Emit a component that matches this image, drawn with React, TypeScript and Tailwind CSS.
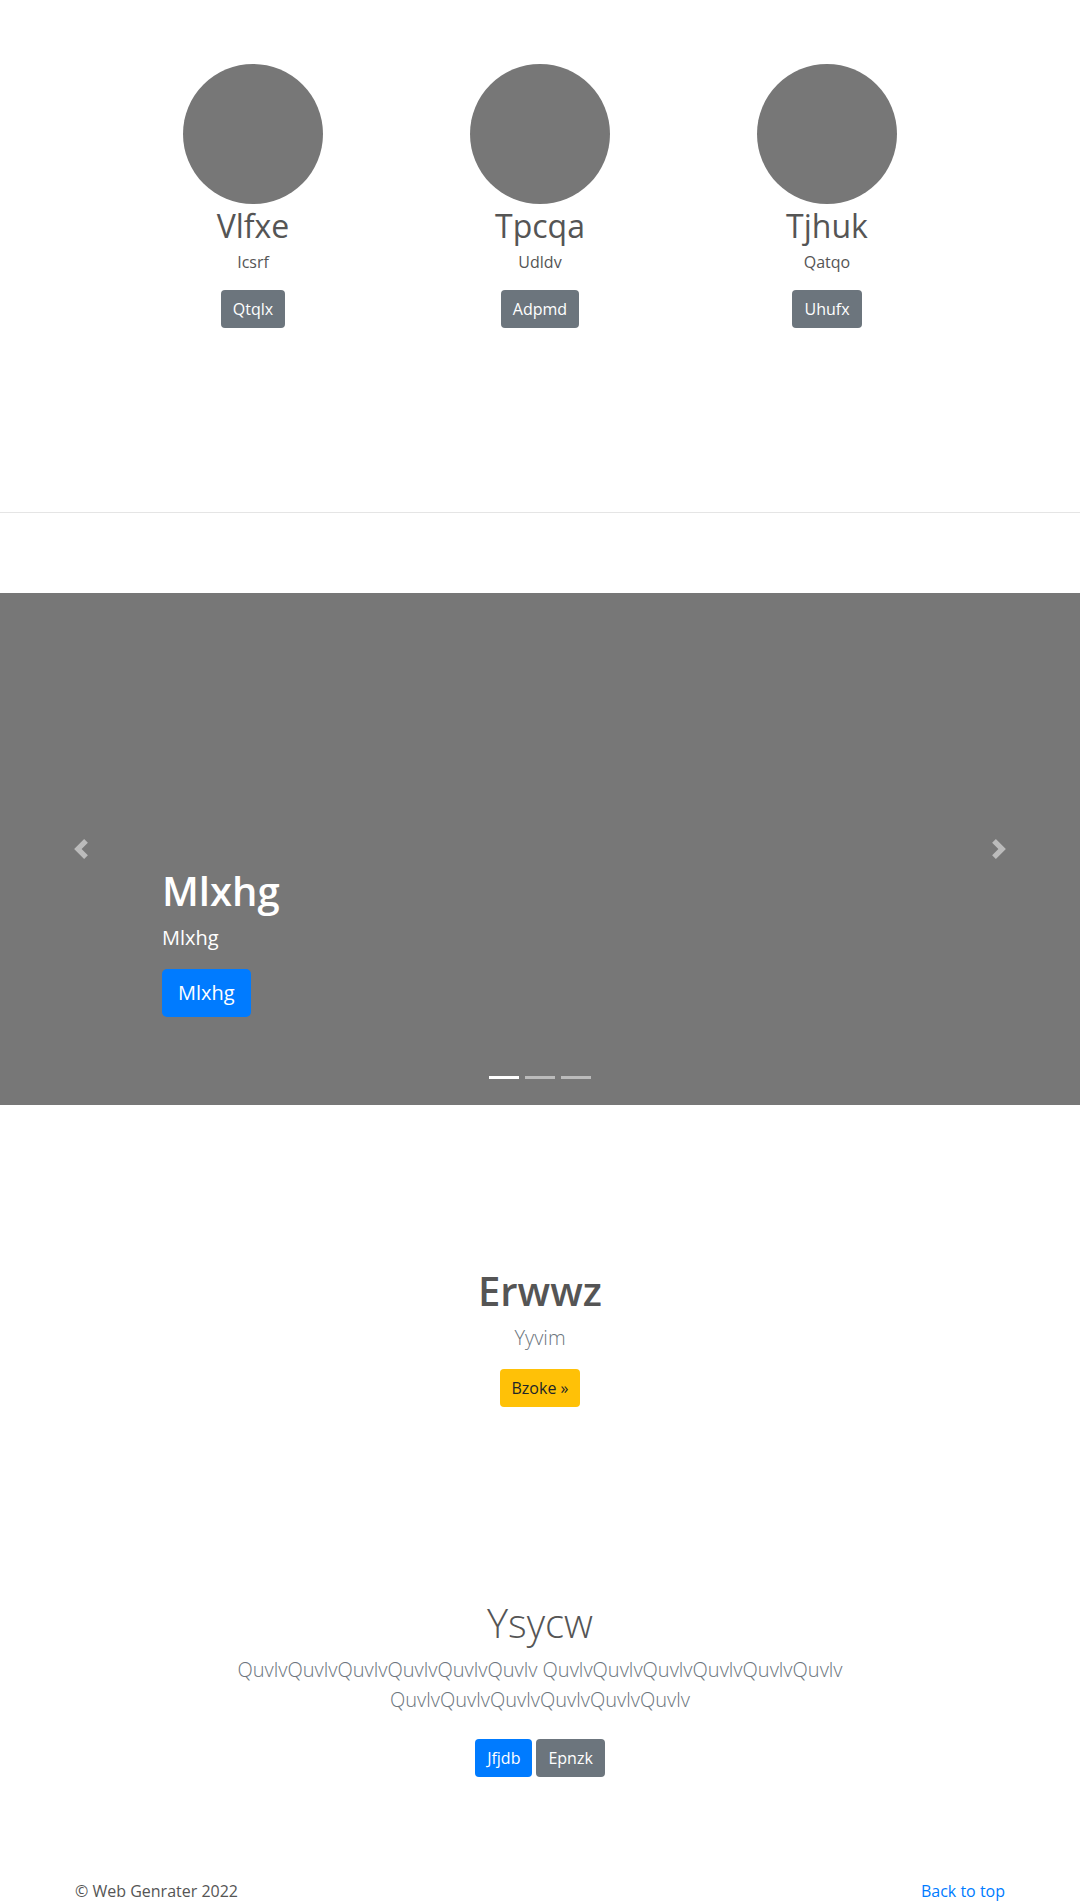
const FONT = { fontFamily: '"Open Sans", "Liberation Sans", sans-serif' };

const people = [
  { name: 'Vlfxe', role: 'Icsrf', action: 'Qtqlx' },
  { name: 'Tpcqa', role: 'Udldv', action: 'Adpmd' },
  { name: 'Tjhuk', role: 'Qatqo', action: 'Uhufx' },
];

const BTN = 'text-white px-3 py-[7px] rounded-[4px] leading-6';

function Chevron({ dir }: { dir: 'prev' | 'next' }) {
  return (
    <svg width="20" height="20" viewBox="0 0 8 8" fill="#fff">
      {dir === 'prev' ? (
        <path d="M5.25 0l-4 4 4 4 1.5-1.5L4.25 4l2.5-2.5L5.25 0z" />
      ) : (
        <path d="M2.75 0l-1.5 1.5L3.75 4l-2.5 2.5L2.75 8l4-4-4-4z" />
      )}
    </svg>
  );
}

export default function App() {
  return (
    <div className="bg-white text-[#555] text-base leading-6" style={FONT}>
      {/* Team row */}
      <div className="pt-[64px] flex justify-center">
        {people.map((p) => (
          <div key={p.name} className="w-[287px] flex flex-col items-center text-center">
            <div className="w-[140px] h-[140px] rounded-full bg-[#777]" />
            <h2 className="text-[32px] leading-[1.2] font-normal mt-[3px] mb-[5px]">{p.name}</h2>
            <p className="mb-4">{p.role}</p>
            <button className={`bg-[#6c757d] ${BTN}`}>{p.action}</button>
          </div>
        ))}
      </div>

      <hr className="mt-[184px] border-0 border-t border-[#e5e5e5]" />

      {/* Carousel */}
      <div className="mt-[80px] relative h-[512px] bg-[#777] overflow-hidden">
        <div className="absolute left-0 top-0 bottom-0 w-[15%] flex items-center justify-center opacity-50">
          <Chevron dir="prev" />
        </div>
        <div className="absolute right-0 top-0 bottom-0 w-[15%] flex items-center justify-center opacity-50">
          <Chevron dir="next" />
        </div>

        <div className="absolute left-[15%] right-[15%] bottom-[88px] text-white">
          <h1 className="text-[40px] leading-[1.2] font-semibold mb-2">Mlxhg</h1>
          <p className="text-[20px] leading-[30px] mb-4">Mlxhg</p>
          <button className="bg-[#007bff] text-white text-[20px] leading-[30px] px-4 py-[9px] rounded-[5px]">
            Mlxhg
          </button>
        </div>

        <div className="absolute left-0 right-0 bottom-[26px] flex justify-center gap-[6px]">
          <span className="w-[30px] h-[3px] bg-white" />
          <span className="w-[30px] h-[3px] bg-white/50" />
          <span className="w-[30px] h-[3px] bg-white/50" />
        </div>
      </div>

      {/* Feature */}
      <div className="pt-[162px] text-center">
        <h2 className="text-[40px] leading-[1.2] font-semibold mb-2">Erwwz</h2>
        <p className="text-[20px] leading-[30px] font-light text-[#6c757d] mb-4">Yyvim</p>
        <button className="bg-[#ffc107] text-[#212529] px-3 py-[7px] rounded-[4px] leading-6">
          Bzoke »
        </button>
      </div>

      {/* Jumbotron */}
      <div className="pt-[192px] text-center">
        <h1 className="text-[40px] leading-[1.2] font-light mb-2">Ysycw</h1>
        <p className="mx-auto max-w-[720px] text-[20px] leading-[30px] font-light text-[#6c757d] mb-4">
          QuvlvQuvlvQuvlvQuvlvQuvlvQuvlv QuvlvQuvlvQuvlvQuvlvQuvlvQuvlv QuvlvQuvlvQuvlvQuvlvQuvlvQuvlv
        </p>
        <p className="flex justify-center gap-1 py-2 mb-4">
          <button className={`bg-[#007bff] ${BTN}`}>Jfjdb</button>
          <button className={`bg-[#6c757d] ${BTN}`}>Epnzk</button>
        </p>
      </div>

      {/* Footer */}
      <footer className="mt-[46px] py-12">
        <div className="w-[960px] mx-auto px-[15px] flex justify-between">
          <p>© Web Genrater 2022</p>
          <a href="#" className="text-[#007bff]">Back to top</a>
        </div>
      </footer>
    </div>
  );
}
